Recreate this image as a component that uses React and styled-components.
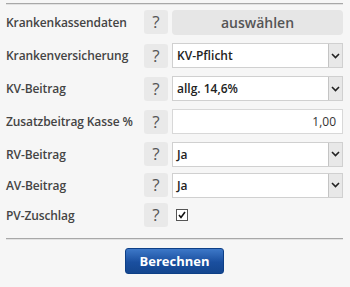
import React from "react"
import styled, { createGlobalStyle } from "styled-components"

const GlobalStyle = createGlobalStyle`
  body {
    margin: 0;
    background: #f6f6f6;
    font-family: "Open Sans", "Liberation Sans", sans-serif;
  }
`

const Page = styled.div`
  width: 350px;
  height: 287px;
  padding: 3px 7px 0 6px;
  box-sizing: border-box;
`

const Rule = styled.hr`
  margin: ${(p) => p.$margin || "0"};
  border: 0;
  border-top: 1px solid #a8a8a8;
  border-bottom: 1px solid #e2e2e2;
`

const Form = styled.div`
  display: grid;
  grid-template-columns: 134px 24px 1fr;
  grid-template-rows: 34px 33px 33px 33px 32px 30px 30px;
  column-gap: 4px;
  align-items: center;
`

const Label = styled.div`
  font-size: 12px;
  font-weight: 600;
  color: #444;
  letter-spacing: -0.1px;
`

const Help = styled.button`
  width: 24px;
  height: 24px;
  padding: 0;
  border: 0;
  border-radius: 3px;
  background: #e9e9e9;
  color: #555;
  font-family: inherit;
  font-size: 17px;
  font-weight: 400;
  line-height: 24px;
  text-align: center;
`

const PickButton = styled.button`
  height: 25px;
  border: 0;
  border-radius: 4px;
  background: #e6e6e6;
  color: #555;
  font-family: inherit;
  font-size: 14px;
  font-weight: 600;
  padding: 0;
`

const SelectBox = styled.div`
  height: 25px;
  display: flex;
  align-items: stretch;
  background: #fff;
  border: 1px solid #d0d0d0;
  box-sizing: border-box;
`

const SelectValue = styled.div`
  flex: 1;
  display: flex;
  align-items: center;
  padding-left: 4px;
  font-size: 12px;
  font-weight: 600;
  color: #222;
`

const Arrow = styled.div`
  width: 13px;
  display: flex;
  align-items: center;
  justify-content: center;
  background: #e8e8e8;
  border-left: 1px solid #c4c4c4;
`

const Input = styled.div`
  height: 25px;
  box-sizing: border-box;
  background: #fff;
  border: 1px solid #d8d8d8;
  display: flex;
  align-items: center;
  justify-content: flex-end;
  padding-right: 6px;
  font-size: 12px;
  color: #333;
`

const Check = styled.div`
  width: 10px;
  height: 10px;
  margin-left: 4px;
  border: 1px solid #555;
  background: #fff;
  display: flex;
  align-items: center;
  justify-content: center;
`

const Actions = styled.div`
  display: flex;
  justify-content: center;
  padding-top: 8px;
`

const Submit = styled.button`
  width: 99px;
  height: 26px;
  border: 1px solid #0d3f86;
  border-radius: 3px;
  background: linear-gradient(#3d78c8, #1a4f9f 55%, #14468f);
  color: #fff;
  font-family: inherit;
  font-size: 13px;
  font-weight: 700;
  padding: 0;
`

function Select({ value }) {
  return (
    <SelectBox>
      <SelectValue>{value}</SelectValue>
      <Arrow>
        <svg width="9" height="6" viewBox="0 0 9 6">
          <path d="M1 1 L4.5 4.5 L8 1" fill="none" stroke="#222" strokeWidth="1.6" />
        </svg>
      </Arrow>
    </SelectBox>
  )
}

export default function App() {
  return (
    <>
      <GlobalStyle />
      <Page>
        <Rule />
        <Form>
          <Label>Krankenkassendaten</Label>
          <Help>?</Help>
          <PickButton>auswählen</PickButton>

          <Label>Krankenversicherung</Label>
          <Help>?</Help>
          <Select value="KV-Pflicht" />

          <Label>KV-Beitrag</Label>
          <Help>?</Help>
          <Select value="allg. 14,6%" />

          <Label>Zusatzbeitrag Kasse %</Label>
          <Help>?</Help>
          <Input>1,00</Input>

          <Label>RV-Beitrag</Label>
          <Help>?</Help>
          <Select value="Ja" />

          <Label>AV-Beitrag</Label>
          <Help>?</Help>
          <Select value="Ja" />

          <Label>PV-Zuschlag</Label>
          <Help>?</Help>
          <div>
            <Check>
              <svg width="8" height="8" viewBox="0 0 8 8">
                <path d="M1 4 L3 6.5 L7 1" fill="none" stroke="#111" strokeWidth="1.6" />
              </svg>
            </Check>
          </div>
        </Form>
        <Rule $margin="8px 0 0" />
        <Actions>
          <Submit>Berechnen</Submit>
        </Actions>
      </Page>
    </>
  )
}
